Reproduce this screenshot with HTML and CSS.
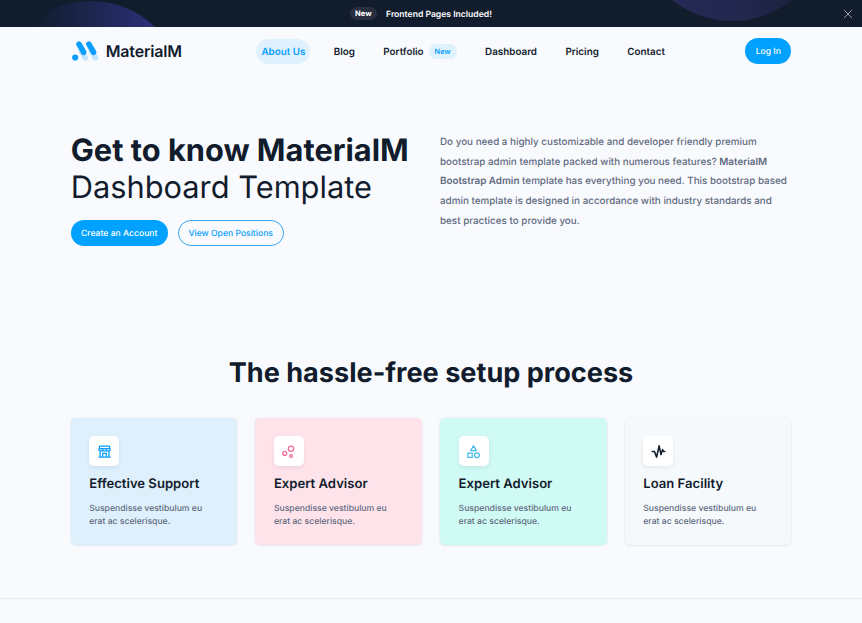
FILE: index.html
```html
<!DOCTYPE html>
<html lang="en">
<head>
<meta charset="utf-8">
<title>MaterialM</title>
<link rel="stylesheet" href="styles.css">
</head>
<body>
<div class="topbar">
  <span class="orb orb-left"></span>
  <span class="orb orb-right"></span>
  <span class="topbar-badge">New</span>
  <span class="topbar-text">Frontend Pages Included!</span>
  <svg class="close" viewBox="0 0 10 10"><path d="M1.2 1.2l7.6 7.6M8.8 1.2L1.2 8.8"/></svg>
</div>
<header class="container header">
  <a class="brand">
    <svg class="logo" viewBox="0 0 28 20" fill="none" stroke-linecap="round" stroke-width="5.6">
      <path class="logo-shade" d="M10.5 10.4l3.8 6.4M20.5 10.4l4 6.4"/>
      <path class="logo-main" d="M8 3.200l4.600 8M17.900 3.200l4.600 8"/>
      <circle class="logo-dot" cx="4.2" cy="16.500" r="3.100"/>
    </svg>
    <span class="brand-name">MaterialM</span>
  </a>
  <nav class="nav">
    <a class="nav-link active">About Us</a>
    <a class="nav-link">Blog</a>
    <a class="nav-link">Portfolio<span class="nav-badge">New</span></a>
    <a class="nav-link">Dashboard</a>
    <a class="nav-link">Pricing</a>
    <a class="nav-link">Contact</a>
  </nav>
  <a class="btn btn-login">Log In</a>
</header>
<main>
  <section class="container hero">
    <div class="hero-main">
      <h1 class="hero-title"><b>Get to know MaterialM</b><br>Dashboard Template</h1>
      <div class="hero-actions">
        <a class="btn btn-create">Create an Account</a>
        <a class="btn btn-outline">View Open Positions</a>
      </div>
    </div>
    <p class="hero-text">Do you need a highly customizable and developer friendly premium<br>bootstrap admin template packed with numerous features? <b>MaterialM</b><br><b>Bootstrap Admin</b> template has everything you need. This bootstrap based<br>admin template is designed in accordance with industry standards and<br>best practices to provide you.</p>
  </section>
  <section class="container setup">
    <h2 class="setup-title">The hassle-free setup process</h2>
    <div class="cards">
      <article class="card card-blue">
        <div class="tile"><svg class="icon" viewBox="0 0 24 24"><path d="M3 21h18M4 3.500h16v4H4zM3 7.500v1a3 3 0 0 0 6 0 3 3 0 0 0 6 0 3 3 0 0 0 6 0v-1zM5 21V11M19 21V11M9 21v-6h6v6"/></svg></div>
        <h3>Effective Support</h3>
        <p>Suspendisse vestibulum eu<br>erat ac scelerisque.</p>
      </article>
      <article class="card card-pink">
        <div class="tile"><svg class="icon" viewBox="0 0 24 24"><circle cx="6" cy="15" r="3.200"/><circle cx="16" cy="7.500" r="4.300"/><circle cx="16" cy="19" r="2.200"/></svg></div>
        <h3>Expert Advisor</h3>
        <p>Suspendisse vestibulum eu<br>erat ac scelerisque.</p>
      </article>
      <article class="card card-teal">
        <div class="tile"><svg class="icon" viewBox="0 0 24 24"><path d="M12 3l-4.500 7.500h9zM3 14.500h7v7H3z"/><circle cx="17.500" cy="18" r="3.900"/></svg></div>
        <h3>Expert Advisor</h3>
        <p>Suspendisse vestibulum eu<br>erat ac scelerisque.</p>
      </article>
      <article class="card card-gray">
        <div class="tile"><svg class="icon icon-pulse" viewBox="0 0 24 24"><path d="M2 12h3.500l3.500 9 4-18 3 14 2.500-8 1.500 3h2"/></svg></div>
        <h3>Loan Facility</h3>
        <p>Suspendisse vestibulum eu<br>erat ac scelerisque.</p>
      </article>
    </div>
  </section>
</main>
</body>
</html>
```
FILE: styles.css
```css
* { box-sizing: border-box; }
body {
  margin: 0;
  height: 623px;
  overflow: hidden;
  background: #f9fafe;
  color: #111c2d;
  font-family: Inter, "Liberation Sans", sans-serif;
  text-rendering: geometricPrecision;
}
h1, h2, h3, p { margin: 0; }
.container { width: 720.6px; margin: 0 auto; }
.topbar {
  position: relative;
  overflow: hidden;
  height: 27px;
  background: #111c2d;
  color: #fff;
  display: flex;
  align-items: center;
  justify-content: center;
  gap: 9.500px;
  padding: 0 20px 0 0;
}
.topbar-badge {
  position: relative;
  height: 13px;
  line-height: 13px;
  padding: 0 5px;
  border-radius: 7px;
  background: #292f40;
  font-size: 7.5px;
  font-weight: 700;
}
.topbar-text { position: relative; font-size: 8.6px; font-weight: 600; line-height: 26px; padding-top: 2px; }
.orb { position: absolute; border-radius: 50%; }
.orb-left {
  left: -1px; top: 1px; width: 184px; height: 184px;
  background: linear-gradient(90deg, #111c2d 20%, #2c2f77 85%);
}
.orb-right {
  left: 636px; top: -171px; width: 192px; height: 192px;
  background: linear-gradient(90deg, #232a55 20%, #20264c 60%, #172039 90%);
}
.close {
  position: absolute; right: 9px; top: 9px; width: 10px; height: 10px;
  stroke: #9aa1ae; stroke-width: 1; fill: none;
}
.header { display: flex; align-items: center; height: 48px; }
.brand { display: flex; align-items: center; width: 185.700px; }
.logo { width: 28px; height: 20px; margin-right: 7px; }
.logo-shade { stroke: #c2e6ff; }
.logo-main { stroke: #0a9eff; }
.logo-dot { fill: #0a9eff; }
.brand-name { font-size: 16px; font-weight: 600; letter-spacing: -0.17px; }
.nav { display: flex; align-items: center; gap: 18.400px; }
.nav-link {
  display: flex; align-items: center;
  height: 25px; padding: 1px 5px 0; border-radius: 13px;
  font-size: 9.85px; font-weight: 600; white-space: nowrap;
}
.nav-link.active { background: #def1fd; color: #0a9eff; }
.nav-badge {
  height: 15px; line-height: 15px; margin: -1px 0 0 5px; padding: 0 6px;
  border-radius: 8px; background: #def1fd; color: #0a9eff; font-size: 7.4px;
}
.btn {
  display: flex; align-items: center; justify-content: center;
  height: 25.500px; padding-top: 1px; border-radius: 13px; background: #00a1ff; color: #fff;
  font-size: 8.6px; font-weight: 500; white-space: nowrap;
}
.btn-login { width: 46px; margin-left: auto; }
.hero { display: flex; padding-top: 57px; }
.hero-main { width: 369.300px; }
.hero-title { font-size: 30.800px; line-height: 37px; font-weight: 400; white-space: nowrap; }
.hero-title b { font-weight: 700; }
.hero-actions { display: flex; gap: 10px; margin-top: 14.400px; }
.btn-create { width: 97px; }
.btn-outline { width: 106px; background: none; border: 1px solid #36a8f0; color: #0a9eff; }
.hero-text { font-size: 9.86px; line-height: 19.7px; font-weight: 500; color: #5f6a7f; white-space: nowrap; padding-top: 1px; }
.hero-text b { font-weight: 600; }
.setup { padding-top: 108px; }
.setup-title { text-align: center; font-size: 27.100px; line-height: 38px; font-weight: 700; white-space: nowrap; }
.cards { display: grid; grid-template-columns: repeat(4, 1fr); gap: 18.200px; margin-top: 26px; }
.card {
  height: 127.500px; padding: 18.500px; border-radius: 5px;
  box-shadow: 0 0 2px rgba(37, 55, 82, 0.12), 0 1px 2px rgba(37, 55, 82, 0.06);
}
.card-blue { background: #def0fc; color: #0a9eff; }
.card-pink { background: #ffe3ea; color: #f06c94; }
.card-teal { background: #d0faf4; color: #46b9ea; }
.card-gray { background: #f5f9fc; color: #111c2d; }
.tile {
  width: 30px; height: 30px; border-radius: 5px; background: #fff;
  display: flex; align-items: center; justify-content: center;
  box-shadow: 0 2px 4px rgba(37, 55, 82, 0.08);
}
.icon { width: 15px; height: 15px; fill: none; stroke: currentColor; stroke-width: 2; stroke-linejoin: round; stroke-linecap: round; }
.icon-pulse { stroke-width: 2.500; }
.card h3 { margin-top: 9px; font-size: 13.100px; line-height: 18px; font-weight: 600; color: #111c2d; white-space: nowrap; }
.card p { margin-top: 9.500px; font-size: 8.65px; line-height: 13px; font-weight: 450; color: #5f6a7f; white-space: nowrap; }
main { height: 524px; border-bottom: 1px solid #e8edf3; }
```
